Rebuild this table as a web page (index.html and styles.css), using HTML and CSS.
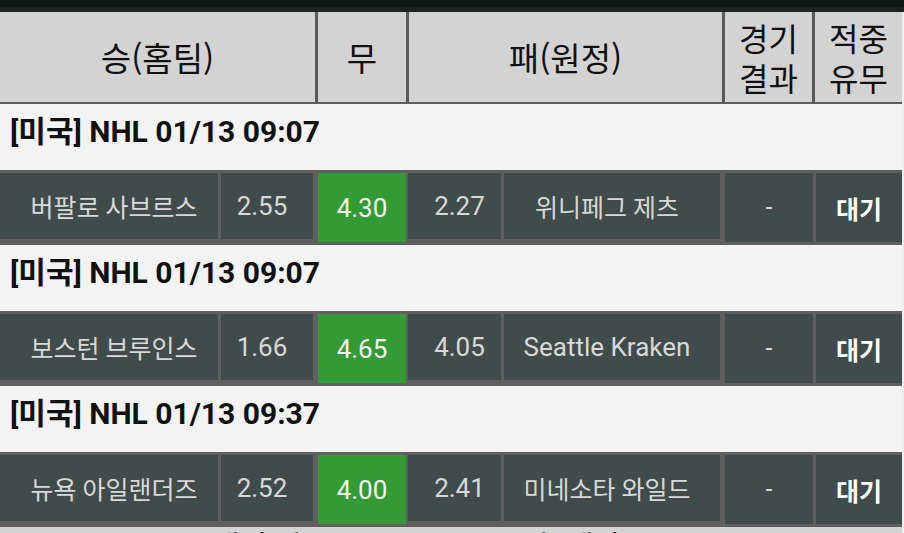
FILE: index.html
```html
<!DOCTYPE html>
<html lang="ko">
<head>
<meta charset="utf-8">
<link rel="stylesheet" href="styles.css">
</head>
<body>
<div class="topbar"><div class="topbar-inner"></div></div>
<div class="board">
  <div class="head">
    <div class="h h-home">승(홈팀)</div>
    <div class="h h-draw">무</div>
    <div class="h h-away">패(원정)</div>
    <div class="h h-res"><span class="hl">경기</span><span class="hl">결과</span></div>
    <div class="h h-hit"><span class="hl">적중</span><span class="hl">유무</span></div>
  </div>

  <div class="group">[미국] NHL 01/13 09:07</div>
  <div class="row">
    <div class="c c-home">버팔로 사브르스</div>
    <div class="c c-odd1">2.55</div>
    <div class="c c-draw">4.30</div>
    <div class="c c-odd2">2.27</div>
    <div class="c c-away">위니페그 제츠</div>
    <div class="c c-res">-</div>
    <div class="c c-hit">대기</div>
  </div>

  <div class="group">[미국] NHL 01/13 09:07</div>
  <div class="row">
    <div class="c c-home">보스턴 브루인스</div>
    <div class="c c-odd1">1.66</div>
    <div class="c c-draw">4.65</div>
    <div class="c c-odd2">4.05</div>
    <div class="c c-away latin">Seattle Kraken</div>
    <div class="c c-res">-</div>
    <div class="c c-hit">대기</div>
  </div>

  <div class="group">[미국] NHL 01/13 09:37</div>
  <div class="row">
    <div class="c c-home">뉴욕 아일랜더즈</div>
    <div class="c c-odd1">2.52</div>
    <div class="c c-draw">4.00</div>
    <div class="c c-odd2">2.41</div>
    <div class="c c-away">미네소타 와일드</div>
    <div class="c c-res">-</div>
    <div class="c c-hit">대기</div>
  </div>

  <div class="foot">
    <div class="f f-left">배팅 마감</div>
    <div class="f f-right">총 배당</div>
  </div>
</div>
</body>
</html>
```

FILE: styles.css
```css
html, body {
  margin: 0;
  padding: 0;
}
body {
  background: #eeeeee;
  font-family: Roboto, "Noto Sans CJK KR", sans-serif;
  width: 904px;
  height: 533px;
  overflow: hidden;
}
.topbar {
  height: 12px;
  background: #1e2220;
}
.topbar-inner {
  height: 7px;
  background: #0b1814;
}
.board {
  width: 902px;
}
.head {
  display: flex;
  height: 90px;
  background: #d3d3d3;
  border-bottom: 2px solid #5e5e5e;
}
.h {
  display: flex;
  flex-direction: column;
  align-items: center;
  justify-content: center;
  text-align: center;
  color: #111;
  font-size: 33px;
  line-height: 40px;
  font-family: "Noto Sans CJK KR", sans-serif;
}
.hl {
  display: block;
  height: 40px;
  line-height: 40px;
}
.h-home { width: 315px; }
.h-draw { width: 88px; border-left: 3px solid #5a5a5a; }
.h-away { width: 313px; border-left: 3px solid #5a5a5a; }
.h-res { width: 87px; border-left: 3px solid #5a5a5a; font-size: 32px; }
.h-hit { width: 87px; border-left: 3px solid #5a5a5a; font-size: 32px; }

.group {
  height: 66px;
  background: #f3f3f3;
  padding-left: 10px;
  font-size: 30px;
  font-weight: bold;
  line-height: 56px;
  color: #111;
}
.row {
  display: flex;
  align-items: flex-start;
  height: 75px;
  box-sizing: border-box;
  padding-top: 3px;
  background: #5e5f5e;
}
.c {
  height: 66px;
  display: flex;
  align-items: center;
  justify-content: center;
  background: #404c4b;
  color: #d8d8d8;
  font-size: 25px;
}
.latin { font-size: 26px; }
.c-home { width: 218px; padding-left: 10px; box-sizing: border-box; }
.c-odd1 { width: 92px; margin-left: 3px; padding-right: 10px; box-sizing: border-box; font-size: 26px; }
.c-draw { width: 88px; margin-left: 5px; height: 69px; background: #349a35; color: #f2f2f2; font-size: 26px; }
.c-odd2 { width: 93px; margin-left: 2px; padding-left: 10px; box-sizing: border-box; font-size: 26px; }
.c-away { width: 216px; margin-left: 3px; padding-right: 10px; box-sizing: border-box; }
.c-res { width: 88px; margin-left: 5px; height: 69px; }
.c-hit { width: 86px; margin-left: 3px; height: 69px; color: #fff; font-weight: bold; }

.foot {
  display: flex;
  height: 40px;
  background: #d3d3d3;
}
.f {
  font-family: "Noto Sans CJK KR", sans-serif;
  font-size: 30px;
  line-height: 34px;
  color: #111;
}
.f-left { width: 318px; padding-left: 212px; box-sizing: border-box; }
.f-right { padding-left: 212px; }
```
